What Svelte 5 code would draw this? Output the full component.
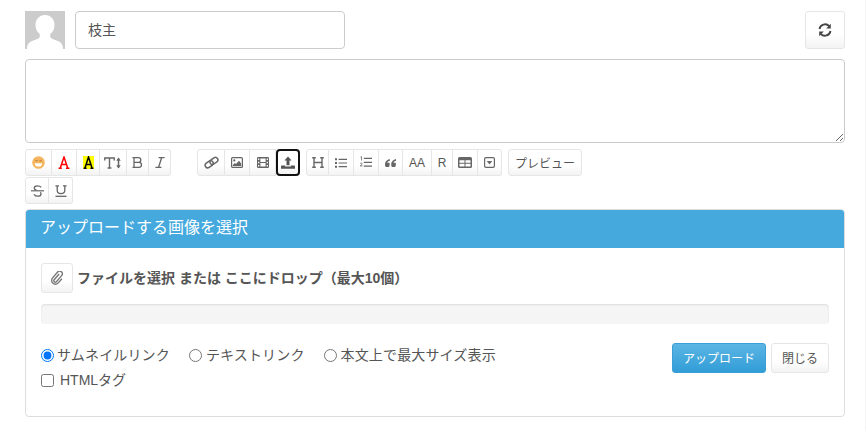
<script>
	const groups = [
		[
			{ id: 'smile', w: 27 },
			{ id: 'color', w: 25 },
			{ id: 'mark', w: 23 },
			{ id: 'size', w: 27 },
			{ id: 'bold', w: 22 },
			{ id: 'italic', w: 22 }
		],
		[
			{ id: 'link', w: 28 },
			{ id: 'image', w: 25 },
			{ id: 'film', w: 26 },
			{ id: 'upload', w: 24 }
		],
		[
			{ id: 'h', w: 23 },
			{ id: 'ul', w: 25 },
			{ id: 'ol', w: 25 },
			{ id: 'quote', w: 24 },
			{ id: 'aa', w: 29, text: 'AA' },
			{ id: 'r', w: 21, text: 'R' },
			{ id: 'table', w: 25 },
			{ id: 'fold', w: 24 }
		]
	];
	const second = [
		{ id: 'strike', w: 24 },
		{ id: 'under', w: 24 }
	];
</script>

{#snippet icon(id)}
	{#if id === 'smile'}
		<svg width="13" height="13" viewBox="0 0 13 13"><circle cx="6.500" cy="6.500" r="6.300" fill="#f4b55e" /><path d="M2.800 7.200h7.400a3.700 3.400 0 0 1-7.400 0z" fill="#fff" /><path d="M3.400 4.800h2.200M7.400 4.800h2.200" fill="none" stroke="#b07a30" stroke-width="1" /></svg>
	{:else if id === 'color'}
		<svg width="12" height="13" viewBox="0 0 12 13"><path d="M.6 12.200h3.200M8 12.200h3.400M2.200 12.200 6 1 9.800 12.200M3.600 8.400h4.800" fill="none" stroke="#f00" stroke-width="1.500" /></svg>
	{:else if id === 'mark'}
		<svg width="11" height="13" viewBox="0 0 11 13"><rect width="11" height="13" fill="#ff0" /><path d="M.6 12.200h3M7.400 12.200h3M1.900 12.200 5.500 1l3.600 11.200M3.200 8.400h4.600" fill="none" stroke="#000" stroke-width="1.500" /></svg>
	{:else if id === 'size'}
		<svg width="18" height="12" viewBox="0 0 18 12"><path d="M.8 3.400V1h9.400v2.400M5.500 1v10M3.600 11h3.800" fill="none" stroke="#666" stroke-width="1.400" /><path d="M14.500 1.400v9.200" stroke="#666" stroke-width="1.500" /><path d="M12.300 3.800 14.500.6l2.200 3.200zM12.300 8.200l2.200 3.200 2.200-3.200z" fill="#666" /></svg>
	{:else if id === 'bold'}
		<svg width="11" height="11" viewBox="0 0 11 11"><path d="M.5.700h6a2.300 2.300 0 0 1 0 4.600H2m0 0h5a2.500 2.500 0 0 1 0 5H.5M2 .700v9.600" fill="none" stroke="#666" stroke-width="1.300" /></svg>
	{:else if id === 'italic'}
		<svg width="10" height="11" viewBox="0 0 10 11"><path d="M3.600.700h6M.4 10.300h6M6.600.700l-3 9.600" fill="none" stroke="#666" stroke-width="1.300" /></svg>
	{:else if id === 'link'}
		<svg width="15" height="13" viewBox="0 0 15 13"><g fill="none" stroke="#666" stroke-width="1.500" transform="rotate(-35 7.500 6.500)"><rect x=".3" y="4.100" width="8.600" height="5" rx="2.500" /><rect x="6.100" y="4.100" width="8.600" height="5" rx="2.500" /></g></svg>
	{:else if id === 'image'}
		<svg width="12" height="11" viewBox="0 0 12 11"><rect x=".6" y=".6" width="10.800" height="9.800" rx="1" fill="none" stroke="#666" stroke-width="1.200" /><circle cx="3.300" cy="3.400" r="1.100" fill="#666" /><path d="M1.800 9h8.400V6.400L8 3.800 5 7 3.900 5.900 1.800 8z" fill="#666" /></svg>
	{:else if id === 'film'}
		<svg width="12" height="11" viewBox="0 0 12 11"><rect width="12" height="11" rx="1.300" fill="#666" /><path d="M1 1.400h1.300v1.600H1zM1 4.700h1.300v1.600H1zM1 8h1.300v1.600H1zM9.700 1.400H11v1.600H9.700zM9.700 4.700H11v1.600H9.700zM9.700 8H11v1.600H9.700zM3.400 1.400h5.200V5H3.400zM3.400 6h5.200v3.600H3.400z" fill="#fff" /></svg>
	{:else if id === 'upload'}
		<svg width="14" height="14" viewBox="0 0 14 14"><path d="M7 .5 10.600 4.600H8.500v4.700h-3V4.600H3.400z" fill="#555" /><path d="M.8 9.600h3.400v1h5.600v-1h3.400a.8.8 0 0 1 .8.800v2.300H0v-2.300a.8.8 0 0 1 .8-.8z" fill="#555" /></svg>
	{:else if id === 'h'}
		<svg width="12" height="11" viewBox="0 0 12 11"><path d="M.2.800h3.600M8.200.800h3.600M.2 10.200h3.600M8.200 10.200h3.600M2 .800v9.400M10 .800v9.400M2 5.500h8" fill="none" stroke="#666" stroke-width="1.400" /></svg>
	{:else if id === 'ul'}
		<svg width="12" height="10" viewBox="0 0 12 10"><path d="M0 .3h2v2H0zM0 4h2v2H0zM0 7.700h2v2H0zM3.600.7H12v1.200H3.600zM3.600 4.400H12v1.200H3.600zM3.600 8.100H12v1.200H3.600z" fill="#666" /></svg>
	{:else if id === 'ol'}
		<svg width="12" height="13" viewBox="0 0 12 13"><path d="M3.800 1.800H12v1.200H3.800zM3.800 5.700H12v1.200H3.800zM3.800 9.600H12v1.200H3.800z" fill="#666" /><path d="M.5 1.100 1.500.5v4M.2 7.500q1.500-1 2 0t-2 2.400h2.200" fill="none" stroke="#666" stroke-width=".8" /></svg>
	{:else if id === 'quote'}
		<svg width="11" height="8" viewBox="0 0 11 8"><path d="M4.800 0Q.6 1 0 4.800V6a2 2 0 0 0 4.600 0V3.800H2.200Q2.400 2.200 4.800 1.700zM11 0Q6.800 1 6.200 4.800V6a2 2 0 0 0 4.600 0V3.800H8.400Q8.600 2.200 11 1.700z" fill="#666" /></svg>
	{:else if id === 'table'}
		<svg width="14" height="11" viewBox="0 0 14 11"><rect width="14" height="11" rx="1.500" fill="#666" /><path d="M1.500 3.200h5v2.500h-5zM7.500 3.200h5v2.500h-5zM1.500 6.800h5v2.700h-5zM7.500 6.800h5v2.700h-5z" fill="#fff" /></svg>
	{:else if id === 'fold'}
		<svg width="11" height="11" viewBox="0 0 11 11"><rect x=".6" y=".6" width="9.800" height="9.800" rx="1.300" fill="none" stroke="#666" stroke-width="1.200" /><path d="M2.700 4h5.600L5.500 7.600z" fill="#666" /></svg>
	{:else if id === 'strike'}
		<svg width="13" height="12" viewBox="0 0 13 12"><path d="M10.200 2.400Q9 .8 6.500.8 3.200.8 3.200 3q0 1.400 2.200 2.200M3 9.300q1.300 1.900 3.800 1.900 3.200 0 3.200-2.300 0-1-.7-1.500" fill="none" stroke="#666" stroke-width="1.300" /><path d="M0 5.800h13" stroke="#666" stroke-width="1.200" /></svg>
	{:else if id === 'under'}
		<svg width="12" height="12" viewBox="0 0 12 12"><path d="M.4.800h3.600M8 .800h3.600M2.200.800v4.500q0 3.300 3.800 3.300t3.800-3.300V.800" fill="none" stroke="#666" stroke-width="1.300" /><path d="M.5 11.300h11" stroke="#666" stroke-width="1.300" /></svg>
	{/if}
{/snippet}

<main class="page">
	<div class="top">
		<svg class="avatar" viewBox="0 0 40 38" width="40" height="38">
			<rect width="40" height="38" fill="#ccc" />
			<path d="M20 4c-6 0-9.500 4.500-9.500 10 0 4 1.800 7.400 4.300 9.300v2.200c0 1.400-1.400 2.200-4.300 3.200C4.500 30.500 2 32.500 2 38h36c0-5.500-2.500-7.500-8.500-9.300-2.900-1-4.300-1.800-4.300-3.200v-2.200c2.500-1.900 4.300-5.300 4.300-9.300C29.500 8.500 26 4 20 4z" fill="#fff" />
		</svg>
		<input class="name" value="枝主" />
		<button class="btn refresh" aria-label="更新">
			<svg width="14" height="14" viewBox="0 0 14 14"><path d="M1.500 6A5.600 5.600 0 0 1 11.200 3.200M12.500 8A5.600 5.600 0 0 1 2.800 10.800" fill="none" stroke="#444" stroke-width="1.900" /><path d="M12.800.8v4.600H8.200zM1.200 13.200V8.600h4.600z" fill="#444" /></svg>
		</button>
	</div>

	<textarea class="body"></textarea>

	<div class="toolbar">
		{#each groups as group}
			<div class="group">
				{#each group as b}
					<button class="btn tool" class:active={b.id === 'upload'} style="width:{b.w}px">
						{#if b.text}{b.text}{:else}{@render icon(b.id)}{/if}
					</button>
				{/each}
			</div>
		{/each}
		<button class="btn tool preview">プレビュー</button>
	</div>
	<div class="group second">
		{#each second as b}
			<button class="btn tool" style="width:{b.w}px">{@render icon(b.id)}</button>
		{/each}
	</div>

	<section class="panel">
		<h2>アップロードする画像を選択</h2>
		<div class="panel-body">
			<div class="file-row">
				<button class="btn clip" aria-label="ファイル">
					<svg width="12" height="14" viewBox="0 0 13 15"><path d="M8.800 3.200 3.400 9.400a1.600 1.600 0 0 0 2.400 2.100l5.700-6.600A2.900 2.900 0 0 0 7.200 1L1.700 7.400a4.100 4.100 0 0 0 6.200 5.400l3.900-4.500" fill="none" stroke="#777" stroke-width="1.500" /></svg>
				</button>
				<strong>ファイルを選択 または ここにドロップ（最大10個）</strong>
			</div>
			<div class="progress"></div>
			<div class="options">
				<div class="choices">
					<div class="radios">
						<label class="first"><input type="radio" name="kind" checked /><span>サムネイルリンク</span></label>
						<label><input type="radio" name="kind" /><span>テキストリンク</span></label>
						<label><input type="radio" name="kind" /><span>本文上で最大サイズ表示</span></label>
					</div>
					<label class="html"><input type="checkbox" /><span>HTMLタグ</span></label>
				</div>
				<div class="actions">
					<button class="btn primary">アップロード</button>
					<button class="btn close">閉じる</button>
				</div>
			</div>
		</div>
	</section>
</main>

<style>
	:global(body) {
		margin: 0;
		background: #fff;
		color: #555;
		font-family: "Liberation Sans", "Noto Sans CJK JP", sans-serif;
		font-size: 14px;
	}

	.page {
		box-sizing: border-box;
		width: 866px;
		height: 430px;
		padding: 11px 20px 0 25px;
		border-right: 1px solid #f4f4f4;
		overflow: hidden;
	}

	.top {
		display: flex;
		align-items: flex-start;
	}

	.avatar {
		flex: none;
	}

	.name {
		box-sizing: border-box;
		width: 270px;
		height: 38px;
		margin-left: 10px;
		padding: 0 12px 3px;
		border: 1px solid #ccc;
		border-radius: 4px;
		color: #555;
		font: 14px "Liberation Sans", "Noto Sans CJK JP", sans-serif;
	}

	.btn {
		box-sizing: border-box;
		display: inline-flex;
		align-items: center;
		justify-content: center;
		padding: 0;
		border: 1px solid #e6e6e6;
		border-radius: 3px;
		background: linear-gradient(#fff 60%, #f3f3f3);
		color: #555;
		font-family: inherit;
	}

	.refresh {
		width: 40px;
		height: 38px;
		margin-left: auto;
	}

	.body {
		display: block;
		box-sizing: border-box;
		width: 820px;
		height: 84px;
		margin: 10px 0 0;
		border: 1px solid #ccc;
		border-radius: 4px;
	}

	.toolbar {
		display: flex;
		margin-top: 6px;
	}

	.group {
		display: flex;
	}

	.group:nth-child(2) {
		margin-left: 26px;
	}

	.group:nth-child(3) {
		margin-left: 6px;
	}

	.tool {
		height: 27px;
		border-left-width: 0;
		border-radius: 0;
		font-size: 12px;
	}

	.tool:first-child {
		border-left-width: 1px;
		border-radius: 3px 0 0 3px;
	}

	.tool:last-child {
		border-radius: 0 3px 3px 0;
	}

	.tool.active {
		border: 2px solid #111;
		border-radius: 4px;
	}

	.tool.preview {
		width: 74px;
		margin-left: 6px;
		border-left-width: 1px;
		border-radius: 3px;
	}

	.second {
		margin-top: 1px;
	}

	.panel {
		box-sizing: border-box;
		width: 820px;
		height: 208px;
		margin-top: 5px;
		border: 1px solid #ddd;
		border-radius: 4px;
		overflow: hidden;
	}

	h2 {
		height: 38px;
		margin: 0;
		padding: 0 14px;
		background: #45a9de;
		color: #fff;
		font-size: 16px;
		font-weight: 400;
		line-height: 36px;
	}

	.panel-body {
		padding: 15px 15px 0;
	}

	.file-row {
		display: flex;
		align-items: center;
		gap: 4px;
	}

	.file-row strong {
		padding-bottom: 2px;
		font-size: 14px;
	}

	.clip {
		width: 32px;
		height: 30px;
	}

	.progress {
		height: 20px;
		margin-top: 11px;
		border-radius: 4px;
		background: #f5f5f5;
		box-shadow: inset 0 1px 2px rgba(0, 0, 0, 0.1);
	}

	.options {
		display: flex;
		justify-content: space-between;
		margin-top: 19px;
	}

	.radios {
		display: flex;
		gap: 19px;
		height: 24px;
		align-items: center;
	}

	.radios span {
		letter-spacing: 0.15px;
	}

	label {
		display: flex;
		align-items: center;
		font-size: 14px;
	}

	label span {
		padding-bottom: 2px;
	}

	label input {
		width: 13px;
		height: 13px;
		margin: 0 4px 0 0;
	}

	label.first input {
		margin-right: 3px;
	}

	.html {
		height: 24px;
		margin-top: 1px;
	}

	.html input {
		margin-right: 6px;
	}

	.actions {
		display: flex;
		gap: 5px;
	}

	.primary {
		width: 94px;
		height: 30px;
		padding-bottom: 2px;
		border-color: #3a9fd6;
		background: linear-gradient(#5bb5e3, #329dd7);
		color: #fff;
		font-size: 12px;
	}

	.close {
		width: 58px;
		height: 30px;
		padding-bottom: 2px;
		font-size: 12px;
	}
</style>
